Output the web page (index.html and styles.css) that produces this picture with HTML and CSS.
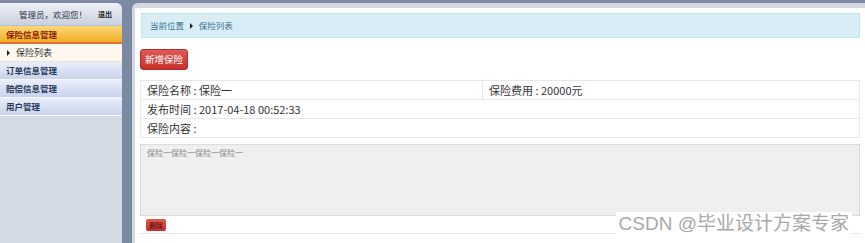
FILE: index.html
```html
<!DOCTYPE html>
<html>
<head>
    <meta charset="UTF-8">
    <link rel="stylesheet" href="styles.css">
</head>
<body>
    <div class="frame">
        <div class="side">
            <div class="side-head">
                <span class="hello">管理员，欢迎您！</span>
                <a class="logout">退出</a>
            </div>
            <div class="menu menu-on">保险信息管理</div>
            <div class="sub"><span class="tri"></span>保险列表</div>
            <div class="menu">订单信息管理</div>
            <div class="menu">赔偿信息管理</div>
            <div class="menu">用户管理</div>
        </div>
        <div class="main">
            <div class="crumb">当前位置 <span class="arrow"></span> 保险列表</div>
            <div class="btn-row"><a class="btn">新增保险</a></div>
            <table class="info">
                <tr><td>保险名称 : 保险一</td><td class="col2">保险费用 : 20000元</td></tr>
                <tr><td colspan="2">发布时间 : 2017-04-18 00:52:33</td></tr>
                <tr><td colspan="2">保险内容 :</td></tr>
            </table>
            <div class="content">保险一保险一保险一保险一</div>
            <div class="del-row"><a class="btn-sm">删除</a></div>
        </div>
    </div>
    <div class="mark">CSDN @毕业设计方案专家</div>
</body>
</html>
```

FILE: styles.css
```css
html, body { margin: 0; height: 100%; }
body { background: #7b89a2; font-family: "Noto Sans CJK SC", "Liberation Sans", sans-serif; overflow: hidden; position: relative; }
.frame { display: flex; gap: 10px; padding-top: 3px; height: 240px; }
.side { width: 122px; flex: none; background: #d2dae3; border-radius: 0 6px 0 0; overflow: hidden; }
.side-head { height: 22px; background: linear-gradient(#eef1f6, #c9d0de); display: flex; align-items: center; padding-left: 19px; border-bottom: 1px solid #b6bfd0; white-space: nowrap; }
.hello { font-size: 8.5px; color: #2d3340; }
.logout { font-size: 7px; font-weight: bold; color: #222; margin-left: 11px; }
.menu { height: 17px; line-height: 17px; font-size: 8.5px; font-weight: bold; color: #2b3a5c; padding-left: 6px; background: linear-gradient(#e9eef9, #c8d3ec); border-bottom: 1px solid #f3f6fb; white-space: nowrap; }
.menu-on { background: linear-gradient(#fbd878, #f2ae22); color: #8c1f08; border-bottom: 2px solid #e86e34; height: 16px; }
.sub { height: 17px; line-height: 17px; font-size: 9px; color: #333; padding-left: 7px; background: #fdf8ef; border-bottom: 1px solid #e9e3d6; display: flex; align-items: center; gap: 6px; }
.tri { width: 0; height: 0; border-left: 3px solid #222; border-top: 3px solid transparent; border-bottom: 3px solid transparent; }
.main { flex: 1; background: #fff; border-radius: 6px 0 0 0; border-top: 5px solid #d3d8e1; border-left: 3px solid #d3d8e1; padding: 5px 5px 0 5px; }
.crumb { height: 23px; line-height: 23px; background: #d9edf7; border: 1px solid #bce8f1; font-size: 8.5px; color: #3a6f8f; padding-left: 8px; margin-left: 1px; }
.arrow { display: inline-block; border-left: 3px solid #222; border-top: 3px solid transparent; border-bottom: 3px solid transparent; margin: 0 4px; }
.btn-row { margin-top: 11px; display: flex; }
.btn { height: 19px; line-height: 19px; padding: 0 4px; font-size: 9.5px; color: #fff; background: linear-gradient(#e05a55, #c6302b); border: 1px solid #b52b27; border-radius: 3px; }
.info { border-collapse: collapse; width: 100%; margin-top: 10px; font-size: 11px; color: #333; }
.info td { border: 1px solid #e7e7e7; height: 18px; padding: 0 6px; }
.col2 { width: 364px; }
.content { margin-top: 6px; background: #efefef; border: 1px solid #dcdcdc; font-size: 8px; color: #888; padding: 2px 6px; box-sizing: border-box; height: 72px; }
.del-row { display: flex; height: 14px; padding: 3px 0 0 6px; border-bottom: 1px solid #e7e7e7; }
.btn-sm { height: 12px; line-height: 12px; padding: 0 3px; font-size: 7px; color: #3a0a0a; background: linear-gradient(#e55752, #c8302b); border-radius: 2px; }
.mark { position: absolute; right: 13px; top: 212px; background: #fff; font-size: 19px; color: #a8a8a8; padding: 0 3px; font-family: "Liberation Sans", "Noto Sans CJK SC", sans-serif; line-height: 23px; }
```
